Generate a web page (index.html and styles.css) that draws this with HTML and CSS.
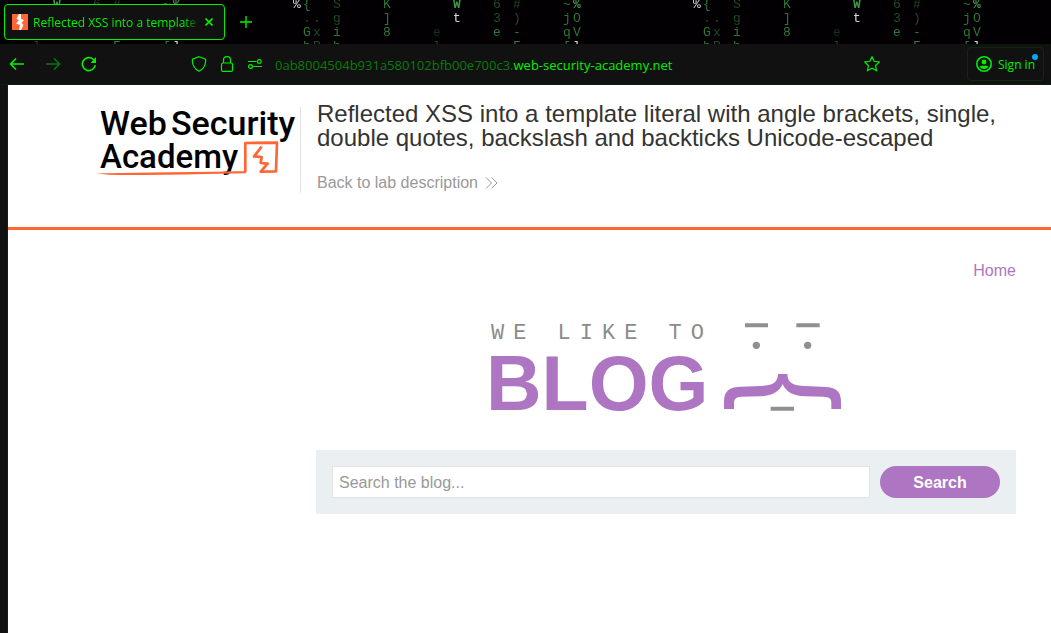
FILE: index.html
```html
<!DOCTYPE html>
<html lang="en">
<head>
<meta charset="utf-8">
<meta name="viewport" content="width=device-width, initial-scale=1">
<title>Reflected XSS into a template literal</title>
<link rel="stylesheet" href="styles.css">
</head>
<body>
<div class="browser">
  <div class="tabs">
    <svg class="rain" aria-hidden="true">
      <defs>
        <pattern id="rain" x="292" y="0" width="400" height="56" patternUnits="userSpaceOnUse">
          <g class="glyphs">
            <text class="white" x="1" y="8">%</text><text x="11" y="8">{</text><text class="dim" x="41" y="8">S</text><text x="91" y="8">K</text><text class="lit" x="161" y="8">W</text><text class="dim" x="201" y="8">6</text><text class="dim" x="221" y="8">#</text><text x="271" y="8">~</text><text class="lit" x="281" y="8">%</text>
            <text class="dim" x="11" y="22">.</text><text class="dim" x="21" y="22">.</text><text class="dim" x="41" y="22">g</text><text x="91" y="22">]</text><text class="white" x="161" y="22">t</text><text class="dim" x="201" y="22">3</text><text class="dim" x="221" y="22">)</text><text x="271" y="22">j</text><text x="281" y="22">O</text>
            <text x="11" y="36">G</text><text class="dim" x="21" y="36">x</text><text x="41" y="36">i</text><text x="91" y="36">8</text><text class="faint" x="141" y="36">e</text><text x="201" y="36">e</text><text x="221" y="36">-</text><text x="271" y="36">q</text><text x="281" y="36">V</text>
            <text x="11" y="50">h</text><text class="dim" x="21" y="50">R</text><text x="41" y="50">h</text><text class="dim" x="91" y="51">c</text><text class="dim" x="141" y="50">l</text><text class="dim" x="201" y="51">c</text><text x="221" y="50">F</text><text x="271" y="50">[</text><text class="white" x="281" y="50">l</text>
          </g>
        </pattern>
      </defs>
      <rect width="100%" height="100%" fill="url(#rain)"/>
    </svg>
    <div class="tab">
      <svg class="icon" viewBox="0 0 16 16" aria-hidden="true"><rect width="16" height="16" fill="#ff6633"/><path d="M7 0H9V5L12 6L9.500 9L11.500 11L9 16H7L8 11L4 9.500L7 6L4.500 5Z" fill="#fff"/></svg>
      <span class="tab-title">Reflected XSS into a template literal</span>
      <button class="plain" aria-label="Close tab"><svg class="close" viewBox="0 0 8 8"><path d="M.5.5L7.500 7.500M7.500.5L.5 7.500"/></svg></button>
    </div>
    <button class="plain new-tab" aria-label="New tab"><svg class="plus" viewBox="0 0 12 12"><path d="M6 0V12M0 6H12"/></svg></button>
  </div>
  <div class="toolbar">
    <button class="plain" aria-label="Back"><svg class="icon" viewBox="0 0 16 16"><path d="M15 8H2M7 2.500L1.500 8L7 13.500"/></svg></button>
    <button class="plain faded" aria-label="Forward"><svg class="icon" viewBox="0 0 16 16"><path d="M1 8H14M9 2.500L14.500 8L9 13.500"/></svg></button>
    <button class="plain" aria-label="Reload"><svg class="icon" viewBox="0 0 16 16"><path d="M14.300 9A6.500 6.500 0 1 1 12.500 3.500L14 5"/><path class="solid" d="M15 1V7H9.500Z"/></svg></button>
    <div class="address">
      <svg class="icon thin" viewBox="0 0 16 16" aria-hidden="true"><path d="M8 .7L14.500 3.200Q15.500 11 8 15.300Q.5 11 1.500 3.200Z"/></svg>
      <svg class="icon thin" viewBox="0 0 16 16" aria-hidden="true"><rect x="2.500" y="7" width="11" height="8.400" rx="1.500"/><path d="M4.500 7V4Q4.500.6 8 .6T11.500 4V7"/></svg>
      <svg class="icon thin" viewBox="0 0 16 16" aria-hidden="true"><path d="M1 5.500H9.500M6.500 10.500H15"/><circle cx="12.300" cy="5.500" r="1.900"/><circle cx="3.500" cy="10.500" r="1.900"/></svg>
      <span class="url">0ab8004504b931a580102bfb00e700c3.<span class="domain">web-security-academy.net</span></span>
    </div>
    <button class="plain star" aria-label="Bookmark"><svg class="icon thin" viewBox="0 0 16 16"><path d="M8 .8L10.200 5.300L15.300 6L11.600 9.500L12.500 14.700L8 12.300L3.500 14.700L4.400 9.500L.7 6L5.800 5.300Z"/></svg></button>
    <button class="signin"><svg class="icon" viewBox="0 0 16 16" aria-hidden="true"><circle cx="8" cy="8" r="7.200"/><circle class="solid" cx="8" cy="6" r="2.400"/><path class="solid" d="M4 9.800H12Q12 13 8 13T4 9.800Z"/></svg><span class="label">Sign in</span><span class="dot"></span></button>
  </div>
  <div class="page">
    <header class="header">
      <a class="brand" href="#" aria-label="Web Security Academy">
        <svg class="brand-logo" viewBox="0 0 200 75">
          <text x="3" y="30">Web</text><text x="74" y="30">Security</text><text class="second" x="3" y="63">Academy</text>
          <g transform="translate(-7 -10) scale(.3333)"><path class="mark" d="M466 231V144L561 143L558 229L512 230L533 206L512 204L515 186L492 184L515 155"/><path class="under" d="M18 235Q150 234 440 229H468V235L350 237Q150 241 55 239Z"/></g>
        </svg>
      </a>
      <div class="heading">
        <h1>Reflected XSS into a template literal with angle brackets, single, double quotes, backslash and backticks Unicode-escaped</h1>
        <a class="back" href="#">Back to lab description <svg class="chevrons" viewBox="0 0 13 12" aria-hidden="true"><path d="M1 .5L6.500 6L1 11.500M6.500.5L12 6L6.500 11.500"/></svg></a>
      </div>
    </header>
    <main class="blog">
      <nav class="nav"><a href="#">Home</a></nav>
      <svg class="blog-logo" viewBox="0 0 354 92" role="img" aria-label="We like to blog">
        <text class="tagline" x="2" y="18">WE LIKE TO</text>
        <text class="word" x="-3" y="89">BLOG</text>
        <g transform="translate(211 -11) scale(.3333)">
          <path class="face" d="M135 40h69v12h-69zM289 40h70v12h-70zM212 290h70v12h-70z"/><circle class="face" cx="169" cy="106" r="11"/><circle class="face" cx="323" cy="106" r="11"/>
          <path class="moustache" d="M72 297V275C72 240 90 231 125 230L180 228C215 227 233 220 234 192H262C263 220 280 227 315 228L365 230C405 231 423 240 423 275V297H394V278C394 265 388 261 370 260L315 259C280 258 257 245 248 222C239 245 215 258 180 259L125 260C108 261 102 267 102 280V297Z"/>
        </g>
      </svg>
      <form class="search">
        <input type="text" placeholder="Search the blog..." aria-label="Search the blog">
        <button type="button">Search</button>
      </form>
    </main>
  </div>
</div>
</body>
</html>
```
FILE: styles.css
```css
* { box-sizing: border-box; }
body { margin: 0; }
.browser {
  display: flex;
  flex-direction: column;
  min-height: 100vh;
  background: #111;
  font: 12px/16px "Open Sans", sans-serif;
  color: #00f000;
}
svg { display: block; flex: none; }
.icon { width: 16px; height: 16px; }
.icon, .close, .plus { fill: none; stroke: #00f000; stroke-width: 1.6; }
.icon rect[fill], .icon path[fill] { stroke: none; }
.icon.thin { stroke-width: 1.2; }
.icon .solid { fill: #00f000; stroke: none; }
.plain { display: block; padding: 0; border: 0; background: none; color: inherit; }

.tabs {
  position: relative;
  display: flex;
  align-items: center;
  gap: 15px;
  height: 44px;
  padding: 0 4px;
  background: #020003;
}
.rain { position: absolute; inset: 0; width: 100%; height: 100%; }
.glyphs { font: 13px "Liberation Mono", monospace; fill: #2e7436; }
.glyphs .dim { fill: #1c4a22; }
.glyphs .faint { fill: #12301a; }
.glyphs .lit { fill: #3b9a45; font-weight: bold; }
.glyphs .white { fill: #d5d5dc; }
.tab {
  position: relative;
  display: flex;
  align-items: center;
  gap: 5px;
  width: 221px;
  height: 36px;
  padding: 0 11px 0 7px;
  border: 1px solid #00f000;
  border-radius: 4px;
  background: #111;
}
.tab-title {
  flex: 1;
  padding-top: 1px;
  overflow: hidden;
  white-space: nowrap;
  mask-image: linear-gradient(to left, transparent, #000 16px);
}
.close { width: 8px; height: 8px; }
.new-tab { position: relative; }
.plus { width: 12px; height: 12px; stroke-width: 1.4; }

.toolbar {
  display: flex;
  align-items: center;
  gap: 20px;
  height: 41px;
  padding: 0 7px 0 9px;
  border-bottom: 1px solid #0c220d;
}
.faded { opacity: .45; }
.address { display: flex; flex: 1; align-items: center; gap: 12px; padding-left: 74px; }
.url { padding-top: 2px; font-size: 13px; color: #0a7a0a; }
.domain { color: #00f000; }
.star { margin-right: 67px; }
.signin {
  position: relative;
  display: flex;
  align-items: center;
  gap: 6px;
  height: 34px;
  padding: 0 8px;
  border: 1px solid #0c2b0e;
  border-radius: 4px;
  background: none;
  font: inherit;
  color: inherit;
}
.label { padding-top: 2px; }
.dot { position: absolute; top: 6px; right: 5px; width: 6px; height: 6px; border-radius: 50%; background: #00a8f8; }

.page {
  flex: 1;
  margin-left: 7px;
  border-left: 1px solid #0c220d;
  background: #fff;
  font: 16px/18px "Liberation Sans", Arial, sans-serif;
  color: #333332;
}
.header { display: flex; padding: 17px 35px 34px 89px; border-bottom: 3px solid #ff6633; }
.brand { flex: none; width: 204px; height: 86px; margin-top: 5px; border-right: 1px solid #e0e0e0; }
.brand-logo { width: 200px; height: 75px; margin-top: -2px; overflow: visible; }
.brand-logo text { font: 500 34px Roboto, sans-serif; fill: #000; }
.brand-logo .second { font-size: 33px; }
.mark { fill: none; stroke: #ff6633; stroke-width: 8; stroke-linejoin: round; }
.under { fill: #ff6633; }
.heading { flex: 1; padding-left: 16px; }
h1 { margin: 0 0 24px; font-size: 24px; font-weight: 400; line-height: 24px; }
.back { display: flex; align-items: center; gap: 7px; color: #999; text-decoration: none; }
.chevrons { width: 13px; height: 12px; fill: none; stroke: #999; }
.blog { padding: 32px 35px 0 308px; }
.nav { text-align: right; }
.nav a { color: #ae75c2; text-decoration: none; }
.blog-logo { width: 354px; height: 92px; margin: 41px auto 37px; overflow: visible; }
.tagline { font: 22px "Liberation Mono", monospace; letter-spacing: 9px; fill: #8c8c8c; }
.word { font: bold 77px "Liberation Sans", Arial, sans-serif; fill: #ae75c2; }
.face { fill: #909090; }
.moustache { fill: #ae75c2; }
.search { display: flex; gap: 10px; padding: 16px; background: #eaeff2; }
.search input {
  flex: 1;
  min-width: 0;
  height: 32px;
  padding: 2px 6px 0;
  border: 1px solid #e3e3e3;
  background: #fff;
  font: inherit;
}
.search input::placeholder { color: #999; }
.search button {
  width: 120px;
  height: 32px;
  padding: 2px 0 0;
  border: 0;
  border-radius: 16px;
  background: #ae75c2;
  font: inherit;
  font-weight: bold;
  color: #fff;
}
```
